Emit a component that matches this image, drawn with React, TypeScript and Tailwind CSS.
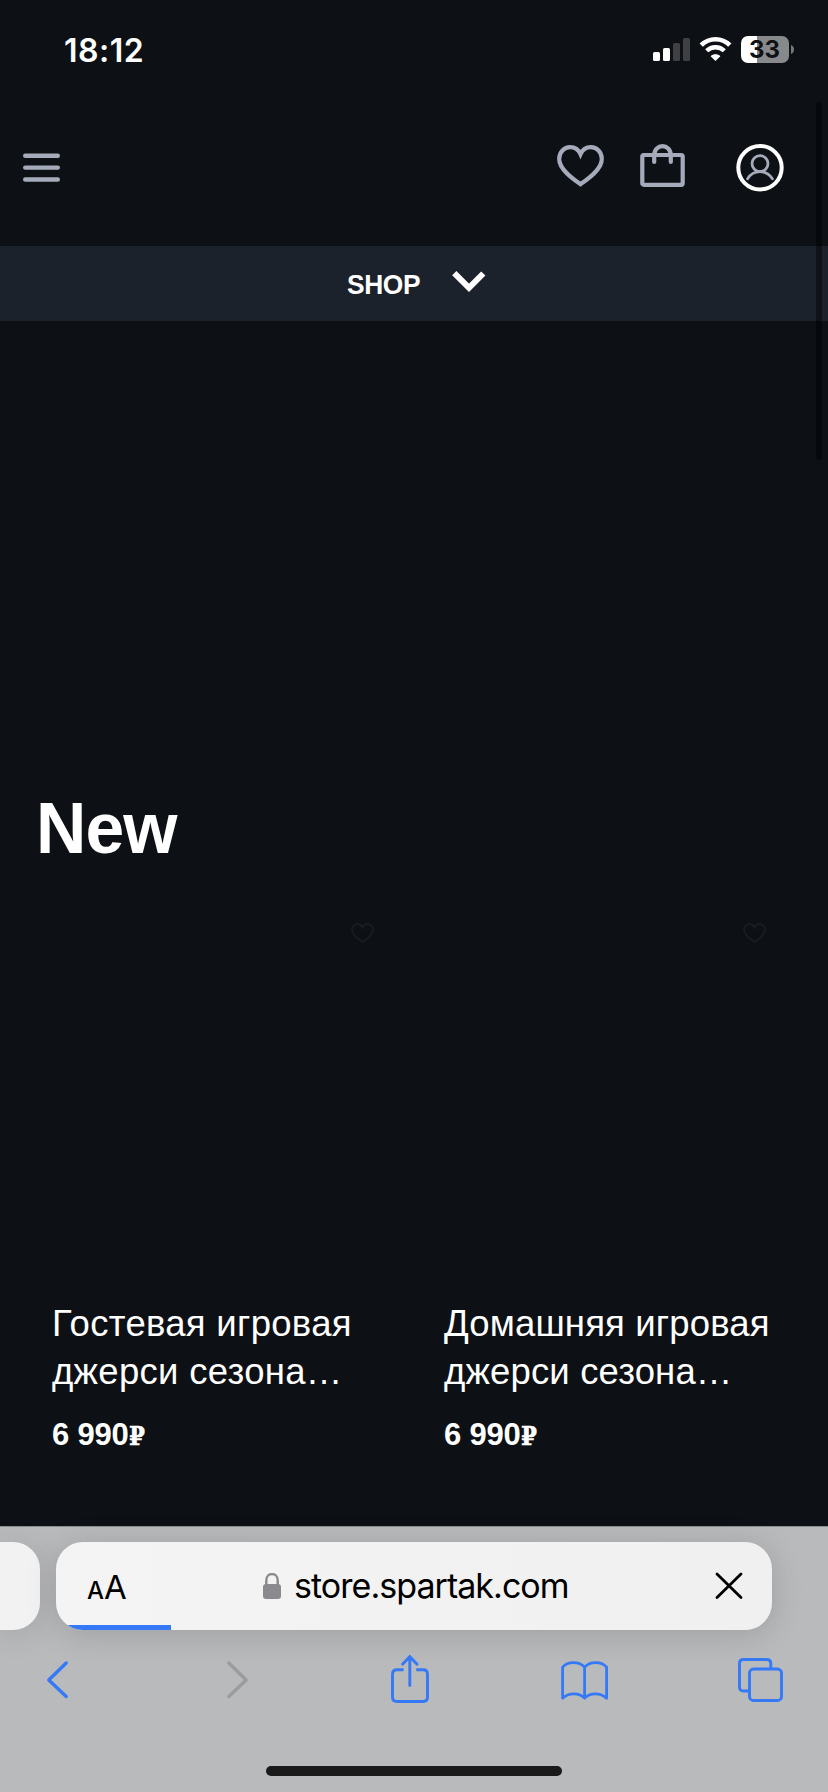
import React from "react";

const products = [
  { id: 1, title: "Гостевая игровая джерси сезона…", price: "6 990", tracking: "tracking-[0.3px]" },
  { id: 2, title: "Домашняя игровая джерси сезона…", price: "6 990", tracking: "tracking-[0.15px]" },
];

const HEART =
  "M23.5 39.2C16 34 2.2 24.5 2.2 14C2.2 7.2 7.2 2.2 13 2.2C17.8 2.2 21.6 4.8 23.5 9.2C25.4 4.8 29.2 2.2 34 2.2C39.8 2.2 44.8 7.2 44.8 14C44.8 24.5 31 34 23.5 39.2Z";

function StatusBar() {
  return (
    <div className="flex h-[100px] items-start justify-between pl-[64px] pr-[34px] pt-[36px]">
      <span className="mt-[1px] font-[Inter,sans-serif] text-[32px] font-semibold leading-[27px] tracking-[0.5px] text-white">18:12</span>
      <div className="flex h-[27px] items-start">
        <svg width="37" height="27" viewBox="0 0 37 27">
          <rect x="0" y="16" width="7" height="9" rx="1.6" fill="#fff" />
          <rect x="10" y="12" width="7" height="13" rx="1.6" fill="#fff" />
          <rect x="20" y="7" width="7" height="18" rx="1.6" fill="#3e4044" />
          <rect x="30" y="2" width="7" height="23" rx="1.6" fill="#3e4044" />
        </svg>
        <svg className="ml-[9px]" width="33" height="27" viewBox="0 0 33 27" fill="none">
          <path d="M2.2 9.2C10.2 1.3 22.8 1.3 30.8 9.2" stroke="#fff" strokeWidth="4.6" />
          <path d="M7.7 14.8C12.6 10 20.4 10 25.3 14.8" stroke="#fff" strokeWidth="4.4" />
          <path d="M16.5 25L11.6 20.2C14.4 17.6 18.6 17.6 21.4 20.2Z" fill="#fff" />
        </svg>
        <div className="ml-[9px] flex h-[27px] w-[48px] items-center justify-center rounded-[7px] bg-[linear-gradient(to_right,#fff_16px,#88898b_16px)]">
          <span className="pr-[1px] font-[Inter,sans-serif] text-[24px] font-bold leading-[27px] text-[#0d1014]">33</span>
        </div>
        <svg className="ml-[2px] mt-[9px]" width="3" height="9" viewBox="0 0 3 9">
          <path d="M0 0C4 1.5 4 7.5 0 9Z" fill="#75777a" />
        </svg>
      </div>
    </div>
  );
}

function Header() {
  return (
    <header className="flex h-[146px] items-start pl-[23px] pr-[44px] pt-[44px] text-[#a5abba]">
      <svg className="mt-[9px]" width="37" height="30" viewBox="0 0 37 30" stroke="currentColor" strokeWidth="4.4" strokeLinecap="round">
        <path d="M2.2 2.7H34.8M2.2 14.6H34.8M2.2 26.5H34.8" />
      </svg>
      <svg className="ml-auto mt-[1px]" width="47" height="43" viewBox="0 0 47 43" fill="none" stroke="currentColor" strokeWidth="4.2">
        <path d={HEART} />
      </svg>
      <svg className="ml-[36px]" width="45" height="44" viewBox="0 0 45 44" fill="none" stroke="currentColor" strokeWidth="4.2">
        <rect x="2.3" y="11" width="40.4" height="29.8" rx="1.5" />
        <path d="M14.2 18V11.5C14.2 -1 30.8 -1 30.8 11.5V18" strokeLinecap="round" />
      </svg>
      <svg className="ml-[51px]" width="48" height="48" viewBox="0 0 48 48" fill="none" strokeLinecap="round">
        <circle cx="24" cy="23.7" r="21.7" stroke="#fff" strokeWidth="4" />
        <circle cx="24" cy="19.6" r="8" stroke="currentColor" strokeWidth="2.8" />
        <path d="M11.6 34.8C17.5 25.3 30.5 25.3 36.4 34.8" stroke="currentColor" strokeWidth="2.8" />
      </svg>
    </header>
  );
}

function ShopBar() {
  return (
    <div className="flex h-[75px] items-start bg-[#1c222b] pl-[347px]">
      <span className="mt-[24px] w-[75px] origin-left scale-x-[0.94] font-['Liberation_Sans',sans-serif] text-[28px] font-bold leading-[30px] tracking-[-0.4px] text-white">SHOP</span>
      <svg className="ml-[30px] mt-[25px]" width="34" height="22" viewBox="0 0 34 22" fill="none" stroke="#fff" strokeWidth="6">
        <path d="M2.3 2.2L17 16.8L31.3 2.5" />
      </svg>
    </div>
  );
}

function Product({ item }: { item: (typeof products)[number] }) {
  return (
    <article className="w-[392px] shrink-0">
      <div className="flex h-[380px] justify-end pr-[70px] pt-[3px]">
        <svg width="23" height="21" viewBox="0 0 47 43" fill="none" stroke="#191d21" strokeWidth="4">
          <path d={HEART} />
        </svg>
      </div>
      <h3 className={`w-[340px] font-['Liberation_Sans',sans-serif] text-[36.5px] leading-[48px] text-white ${item.tracking}`}>{item.title}</h3>
      <p className="mt-[19px] flex h-[40px] items-baseline font-['Liberation_Sans',sans-serif] text-[31px] font-bold leading-[40px] tracking-[-0.2px] text-white">
        <span>{item.price}</span>
        <span className="origin-left scale-x-[0.88] font-['DejaVu_Serif',serif] text-[26px] [-webkit-text-stroke:0.5px_white]">₽</span>
      </p>
    </article>
  );
}

function AddressBar() {
  return (
    <div className="flex h-[88px] gap-[16px]">
      <div className="w-[40px] rounded-r-[27px] bg-[#f2f2f2] shadow-[0_4px_32px_rgba(0,0,0,0.12)]" />
      <div className="rounded-[27px] shadow-[0_4px_32px_rgba(0,0,0,0.15)]">
        <div className="flex h-[88px] w-[716px] flex-col overflow-hidden rounded-[27px] bg-[linear-gradient(to_right,#f4f4f4,#f0f0f0)]">
          <div className="flex h-[83px] items-start pl-[31px] pr-[29px] font-[Inter,sans-serif] text-black">
            <div className="flex w-[176px] items-baseline pt-[25px] leading-[40px]">
              <span className="text-[24px] font-medium">A</span>
              <span className="text-[33px]">A</span>
            </div>
            <svg className="mt-[31px]" width="18" height="26" viewBox="0 0 18 26">
              <path d="M3.3 12V7.4C3.3 -1 14.7 -1 14.7 7.4V12" fill="none" stroke="#8a898e" strokeWidth="2.4" />
              <rect x="0" y="11" width="18" height="15" rx="3" fill="#8a898e" />
            </svg>
            <span className="ml-[13px] mt-[24px] whitespace-nowrap text-[34px] leading-[40px] tracking-[-0.96px]">store.spartak.com</span>
            <svg className="ml-auto mt-[30px]" width="28" height="28" viewBox="0 0 28 28" stroke="#000" strokeWidth="2.8" strokeLinecap="round">
              <path d="M2 2L26 25.5M26 2L2 25.5" />
            </svg>
          </div>
          <div className="h-[5px] w-[115px] bg-[#3579f7]" />
        </div>
      </div>
    </div>
  );
}

function Toolbar() {
  return (
    <nav className="flex h-[136px] items-start pl-[46px] pr-[44px] pt-[22px] text-[#3579f7]">
      <svg width="23" height="54" viewBox="0 0 23 54" fill="none" stroke="currentColor" strokeWidth="3.4" strokeLinecap="round" strokeLinejoin="round">
        <path d="M20.2 11L2.8 28L20.2 44.5" />
      </svg>
      <svg className="ml-[157px]" width="23" height="54" viewBox="0 0 23 54" fill="none" stroke="#9c9c9d" strokeWidth="3.4" strokeLinecap="round" strokeLinejoin="round">
        <path d="M2.8 11L20.2 28L2.8 44.5" />
      </svg>
      <svg className="ml-[142px]" width="39" height="54" viewBox="0 0 39 54" fill="none" stroke="currentColor" strokeWidth="2.9">
        <path d="M12.6 17.8H6Q1.5 17.8 1.5 22.3V45Q1.5 49.5 6 49.5H32Q36.5 49.5 36.5 45V22.3Q36.5 17.8 32 17.8H25.2" />
        <path d="M18.8 33.5V5M11.5 12.2L18.8 4.7L26.1 12.2" strokeLinecap="round" strokeLinejoin="miter" />
      </svg>
      <svg className="ml-[131px]" width="48" height="54" viewBox="0 0 48 54" fill="none" stroke="currentColor" strokeWidth="2.8" strokeLinejoin="round">
        <path d="M23.6 15.2C18.5 9 6.5 9 1.6 15.2V46.2C7.5 40.3 18.5 40.3 23.6 46.2C28.7 40.3 39.7 40.3 45.6 46.2V15.2C40.7 9 28.7 9 23.6 15.2V46.2" />
      </svg>
      <svg className="ml-auto" width="46" height="54" viewBox="0 0 46 54" fill="none" stroke="currentColor" strokeWidth="2.9">
        <rect x="11.5" y="17" width="32" height="31.5" rx="4" />
        <path d="M11.5 39H5.5Q1.5 39 1.5 35V11.5Q1.5 7.5 5.5 7.5H28.5Q32.8 7.5 32.8 11.5V17" />
      </svg>
    </nav>
  );
}

export default function App() {
  return (
    <div className="relative flex h-[1792px] w-[828px] flex-col overflow-hidden bg-[#0d1014]">
      <StatusBar />
      <Header />
      <ShopBar />
      <main className="h-[1205px] pt-[467px]">
        <h2 className="ml-[36px] w-[200px] origin-left scale-x-[0.955] font-['Liberation_Sans',sans-serif] text-[73px] font-bold leading-[80px] tracking-[-1px] text-white">New</h2>
        <section className="flex pl-[52px] pt-[52px]">
          {products.map((item) => (
            <Product key={item.id} item={item} />
          ))}
        </section>
      </main>
      <footer className="h-[266px] border-t border-[#8d8e90] bg-[#b9babc] pt-[15px]">
        <AddressBar />
        <Toolbar />
        <div className="mx-auto h-[10px] w-[296px] rounded-full bg-[#1a1a1a]" />
      </footer>
      <div className="absolute right-[6px] top-[102px] h-[358px] w-[6px] rounded-full bg-black/45" />
    </div>
  );
}
